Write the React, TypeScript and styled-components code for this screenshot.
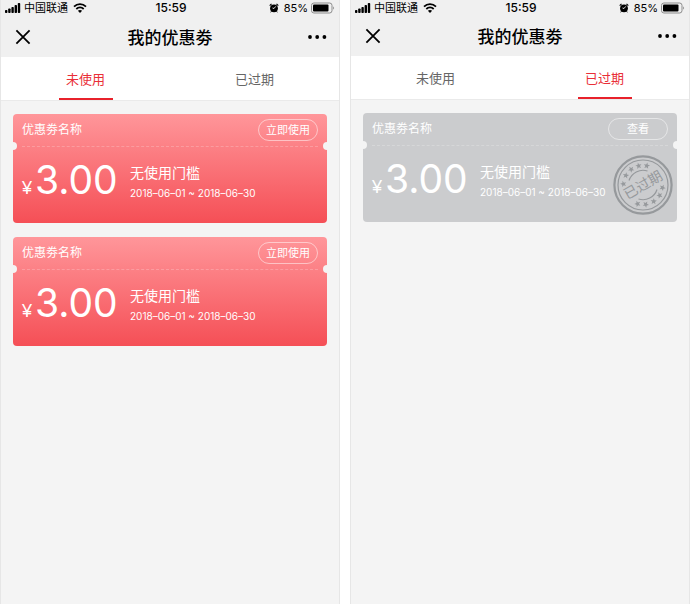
import React, { useState } from "react";
import styled, { createGlobalStyle, css } from "styled-components";

const GlobalStyle = createGlobalStyle`
  * { box-sizing: border-box; }
  body {
    margin: 0;
    background: #fff;
    font-family: Inter, "Noto Sans CJK SC", sans-serif;
    color: #000;
  }
  button { font-family: inherit; padding: 0; border: 0; background: none; cursor: pointer; }
  h1, h2, p { margin: 0; font-weight: 400; }
`;

const Screens = styled.main`
  display: grid;
  grid-template-columns: 1fr 1fr;
  gap: 10px;
  min-height: 100vh;
`;

const Phone = styled.section`
  background: #f4f4f4;
  border: solid #e6e6e6;
  border-width: 0 1px;
`;

const StatusBar = styled.div<{ $compact: boolean }>`
  display: grid;
  grid-template-columns: 1fr auto 1fr;
  align-items: center;
  height: ${(p) => (p.$compact ? 15 : 16)}px;
  padding: 0 4px;
  background: #f0f0f0;
  font-size: 11px;
  line-height: 16px;
`;

const StatusGroup = styled.div<{ $end?: boolean }>`
  display: flex;
  align-items: center;
  justify-content: ${(p) => (p.$end ? "flex-end" : "flex-start")};
  gap: 3px;
`;

const AlarmSlot = styled.span`
  display: flex;
  margin-right: 2px;
`;

const WifiSlot = styled.span`
  display: flex;
  margin-left: 2px;
`;

const Time = styled.span`
  padding-left: 2px;
  font-size: 12px;
  font-weight: 500;
`;

const NavBar = styled.header`
  display: grid;
  grid-template-columns: 1fr auto 1fr;
  align-items: center;
  height: 41px;
  padding: 0 12px 0 14px;
  background: #f0f0f0;
`;

const NavButton = styled.button<{ $end?: boolean }>`
  display: flex;
  justify-self: ${(p) => (p.$end ? "end" : "start")};
`;

const Title = styled.h1`
  padding: 2px 2px 0 0;
  font-size: 17px;
  line-height: 24px;
  font-weight: 500;
`;

const Tabs = styled.div`
  display: flex;
  height: 44px;
  background: #fff;
  border-bottom: 1px solid #eaeaea;
`;

const Tab = styled.button<{ $active: boolean }>`
  position: relative;
  flex: 1;
  font-size: 13px;
  line-height: 20px;
  color: #666;
  ${(p) =>
    p.$active &&
    css`
      color: #e92f38;
      &::after {
        content: "";
        position: absolute;
        left: calc(50% - 27px);
        bottom: 0;
        width: 54px;
        height: 2px;
        background: #e8212b;
      }
    `}
`;

const CouponList = styled.div`
  display: flex;
  flex-direction: column;
  gap: 14px;
  padding: 13px 12px;
`;

const Card = styled.article<{ $expired: boolean }>`
  position: relative;
  height: 109px;
  padding: 0 9px;
  border-radius: 4px;
  color: #fff;
  background: ${(p) => (p.$expired ? "#cbccce" : "linear-gradient(#ff969a, #f54f56)")};
  &::before,
  &::after {
    content: "";
    position: absolute;
    top: 28px;
    width: 8px;
    height: 8px;
    border-radius: 50%;
    background: #f4f4f4;
  }
  &::before { left: -4px; }
  &::after { right: -4px; }
`;

const CardHead = styled.div`
  display: flex;
  align-items: center;
  justify-content: space-between;
  height: 33px;
  border-bottom: 1px dashed rgba(255, 255, 255, 0.22);
`;

const CardName = styled.h2`
  font-size: 12px;
  line-height: 18px;
`;

const ActionButton = styled.button`
  width: 60px;
  height: 22px;
  border: 1px solid rgba(255, 255, 255, 0.5);
  border-radius: 11px;
  color: #fff;
  font-size: 11px;
  line-height: 18px;
`;

const CardBody = styled.div`
  display: grid;
  grid-template-columns: 93px 1fr;
  align-items: center;
  gap: 15px;
  height: 71px;
`;

const Amount = styled.p`
  display: flex;
  align-items: baseline;
  gap: 3px;
  padding-top: 2px;
  font-size: 39px;
  line-height: 48px;
`;

const Currency = styled.span`
  font-family: "Liberation Sans", sans-serif;
  font-size: 18px;
`;

const Terms = styled.div`
  display: flex;
  flex-direction: column;
`;

const Threshold = styled.p`
  font-size: 14px;
  line-height: 20px;
`;

const Dates = styled.p`
  font-size: 10px;
  line-height: 20px;
  white-space: nowrap;
`;

const StampSlot = styled.div`
  position: absolute;
  right: 4px;
  top: 42px;
  display: flex;
`;

const StampText = styled.text`
  font-size: 14px;
`;

const Signal = () => (
  <svg width="16" height="10" viewBox="0 0 16 10" aria-hidden="true">
    <rect x="0" y="7" width="2.4" height="3" rx="0.8" />
    <rect x="3.2" y="5.5" width="2.4" height="4.5" rx="0.8" />
    <rect x="6.4" y="4" width="2.4" height="6" rx="0.8" />
    <rect x="9.6" y="2" width="2.4" height="8" rx="0.8" />
    <rect x="12.8" y="0" width="2.4" height="10" rx="0.8" />
  </svg>
);

const Wifi = () => (
  <svg width="14" height="10" viewBox="0 0 14 10" fill="none" stroke="#000" strokeWidth="1.8" aria-hidden="true">
    <path d="M1 3.6C4.4 0.2 9.6 0.2 13 3.6" />
    <path d="M3.3 6C5.4 4 8.6 4 10.7 6" />
    <path d="M7 9.9L4.9 7.8C6.1 6.7 7.9 6.7 9.1 7.8Z" fill="#000" stroke="none" />
  </svg>
);

const Alarm = () => (
  <svg width="10" height="10" viewBox="0 0 10 10" aria-hidden="true">
    <circle cx="5" cy="5.3" r="3.9" />
    <path d="M0.7 2.6L2.5 0.9M9.3 2.6L7.5 0.9" stroke="#000" strokeWidth="1.2" />
    <path d="M2.4 8.3L1.7 9.3M7.6 8.3L8.3 9.3" stroke="#000" strokeWidth="1" />
    <path d="M6.7 3.4L5 5.5L3.5 5" fill="none" stroke="#f0f0f0" strokeWidth="0.9" />
  </svg>
);

const Battery = () => (
  <svg width="24" height="12" viewBox="0 0 24 12" aria-hidden="true">
    <rect x="0.5" y="1" width="20.5" height="10" rx="2.4" fill="none" stroke="#8c8c8c" />
    <rect x="2" y="2.5" width="15.5" height="7" rx="1" />
    <path d="M22.2 4.2Q24 6 22.2 7.8Z" fill="#777" />
  </svg>
);

const Close = () => (
  <svg width="16" height="16" viewBox="0 0 16 16" stroke="#000" strokeWidth="1.8" aria-hidden="true">
    <path d="M1.4 1.4L14.6 14.6M14.6 1.4L1.4 14.6" />
  </svg>
);

const More = () => (
  <svg width="20" height="6" viewBox="0 0 20 6" aria-hidden="true">
    <circle cx="3" cy="3" r="1.9" />
    <circle cx="10.2" cy="3" r="1.9" />
    <circle cx="17.4" cy="3" r="1.9" />
  </svg>
);

const star = Array.from({ length: 10 }, (_, i) => {
  const r = i % 2 ? 1.4 : 3.3;
  const a = (i * Math.PI) / 5;
  return `${(r * Math.sin(a)).toFixed(2)},${(-r * Math.cos(a)).toFixed(2)}`;
}).join(" ");

const starAngles = [-87, -61, -37, -13, 11, 98, 122, 147, 172, 196];

const Stamp = () => (
  <svg width="60" height="60" viewBox="-30 -30 60 60" fill="none" stroke="#96999c" role="img" aria-label="已过期">
    <circle r="28.6" strokeWidth="2.2" />
    <circle r="25" strokeWidth="1.2" />
    <path d="M-14 -4.5A14.7 14.7 0 0 1 4.5 -14M14 4.5A14.7 14.7 0 0 1 -4.5 14" strokeWidth="1.2" />
    <g fill="#96999c" stroke="none">
      {starAngles.map((a) => (
        <polygon key={a} points={star} transform={`rotate(${a}) translate(0 -19.6)`} />
      ))}
      <StampText textAnchor="middle" y="5" transform="rotate(-30)">
        已过期
      </StampText>
    </g>
  </svg>
);

const tabNames = ["未使用", "已过期"];

function Coupon({ expired }: { expired: boolean }) {
  return (
    <Card $expired={expired}>
      <CardHead>
        <CardName>优惠劵名称</CardName>
        <ActionButton>{expired ? "查看" : "立即使用"}</ActionButton>
      </CardHead>
      <CardBody>
        <Amount>
          <Currency>¥</Currency>3.00
        </Amount>
        <Terms>
          <Threshold>无使用门槛</Threshold>
          <Dates>2018–06–01 ~ 2018–06–30</Dates>
        </Terms>
      </CardBody>
      {expired && (
        <StampSlot>
          <Stamp />
        </StampSlot>
      )}
    </Card>
  );
}

function CouponScreen({ initialTab, compact = false }: { initialTab: number; compact?: boolean }) {
  const [tab, setTab] = useState(initialTab);
  return (
    <Phone>
      <StatusBar $compact={compact}>
        <StatusGroup>
          <Signal />
          <span>中国联通</span>
          <WifiSlot>
            <Wifi />
          </WifiSlot>
        </StatusGroup>
        <Time>15:59</Time>
        <StatusGroup $end>
          <AlarmSlot>
            <Alarm />
          </AlarmSlot>
          <span>85%</span>
          <Battery />
        </StatusGroup>
      </StatusBar>
      <NavBar>
        <NavButton aria-label="关闭">
          <Close />
        </NavButton>
        <Title>我的优惠劵</Title>
        <NavButton $end aria-label="更多">
          <More />
        </NavButton>
      </NavBar>
      <Tabs role="tablist">
        {tabNames.map((name, i) => (
          <Tab key={name} role="tab" aria-selected={tab === i} $active={tab === i} onClick={() => setTab(i)}>
            {name}
          </Tab>
        ))}
      </Tabs>
      <CouponList>
        {tab === 0 ? (
          <>
            <Coupon expired={false} />
            <Coupon expired={false} />
          </>
        ) : (
          <Coupon expired />
        )}
      </CouponList>
    </Phone>
  );
}

export default function App() {
  return (
    <>
      <GlobalStyle />
      <Screens>
        <CouponScreen initialTab={0} />
        <CouponScreen initialTab={1} compact />
      </Screens>
    </>
  );
}
